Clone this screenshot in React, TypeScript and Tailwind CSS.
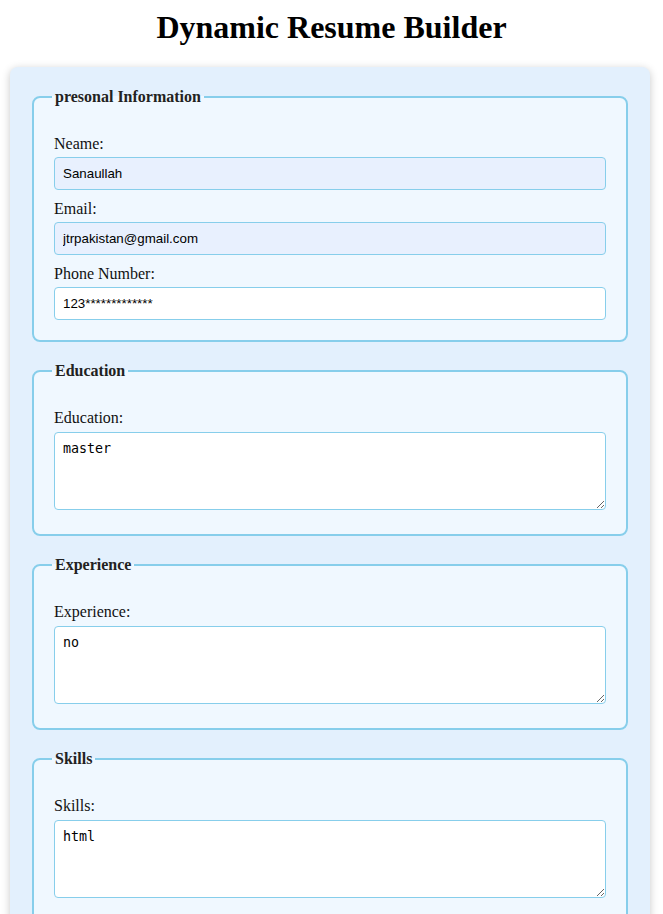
import { useState } from 'react'

const serif = "font-['Liberation_Serif','Times_New_Roman',serif]"

interface FieldProps {
  label: string
  value: string
  onChange: (v: string) => void
  filled?: boolean
  type?: string
}

function InputField({ label, value, onChange, filled, type = 'text' }: FieldProps) {
  return (
    <div>
      <label className="block mt-[10px] mb-[4px] text-[16px] leading-[18px] text-[#111]">{label}</label>
      <input
        type={type}
        value={value}
        onChange={e => onChange(e.target.value)}
        className={`block w-full h-[33px] px-[8px] border border-[#87ceeb] rounded-[4px] font-['Liberation_Sans',Arial,sans-serif] text-[13.33px] text-black outline-none ${
          filled ? 'bg-[#e8f0fe]' : 'bg-white'
        }`}
      />
    </div>
  )
}

function AreaField({ label, value, onChange }: FieldProps) {
  return (
    <div>
      <label className="block mt-[10px] mb-[5px] text-[16px] leading-[18px] text-[#111]">{label}</label>
      <textarea
        value={value}
        onChange={e => onChange(e.target.value)}
        className="block w-full h-[78px] mb-[4px] p-[8px] border border-[#87ceeb] rounded-[4px] bg-white font-['DejaVu_Sans_Mono','Liberation_Mono',monospace] text-[13.33px] leading-[16px] text-black outline-none"
      />
    </div>
  )
}

function Section({ title, children }: { title: string; children: React.ReactNode }) {
  return (
    <fieldset className="mb-[20px] px-[20px] pt-[19px] pb-[20px] border-2 border-[#87ceeb] rounded-[8px] bg-[#f0f8ff]">
      <legend className="-ml-[2px] px-[3px] text-[16px] leading-[18px] font-bold text-[#222]">{title}</legend>
      {children}
    </fieldset>
  )
}

export default function App() {
  const [name, setName] = useState('Sanaullah')
  const [email, setEmail] = useState('jtrpakistan@gmail.com')
  const [phone, setPhone] = useState('123*************')
  const [education, setEducation] = useState('master')
  const [experience, setExperience] = useState('no')
  const [skills, setSkills] = useState('html')

  return (
    <div className={`${serif} bg-white min-h-screen pb-[20px]`}>
      <h1 className="mt-[9px] mb-[21px] text-center text-[32px] leading-[37px] font-bold text-black">
        Dynamic Resume Builder
      </h1>

      <form
        onSubmit={e => e.preventDefault()}
        className="ml-[10px] mr-[13px] pt-[21px] px-[22px] pb-[2px] bg-[#e3f0fd] rounded-[8px] shadow-[0_2px_8px_rgba(0,0,0,0.22)]"
      >
        <Section title="presonal Information">
          <InputField label="Neame:" value={name} onChange={setName} filled />
          <InputField label="Email:" value={email} onChange={setEmail} filled type="email" />
          <InputField label="Phone Number:" value={phone} onChange={setPhone} />
        </Section>

        <Section title="Education">
          <AreaField label="Education:" value={education} onChange={setEducation} />
        </Section>

        <Section title="Experience">
          <AreaField label="Experience:" value={experience} onChange={setExperience} />
        </Section>

        <Section title="Skills">
          <AreaField label="Skills:" value={skills} onChange={setSkills} />
        </Section>

        <button
          type="submit"
          className="mb-[20px] px-[16px] py-[8px] bg-[#87ceeb] text-white rounded-[4px] text-[16px]"
        >
          Generate Resume
        </button>
      </form>
    </div>
  )
}
